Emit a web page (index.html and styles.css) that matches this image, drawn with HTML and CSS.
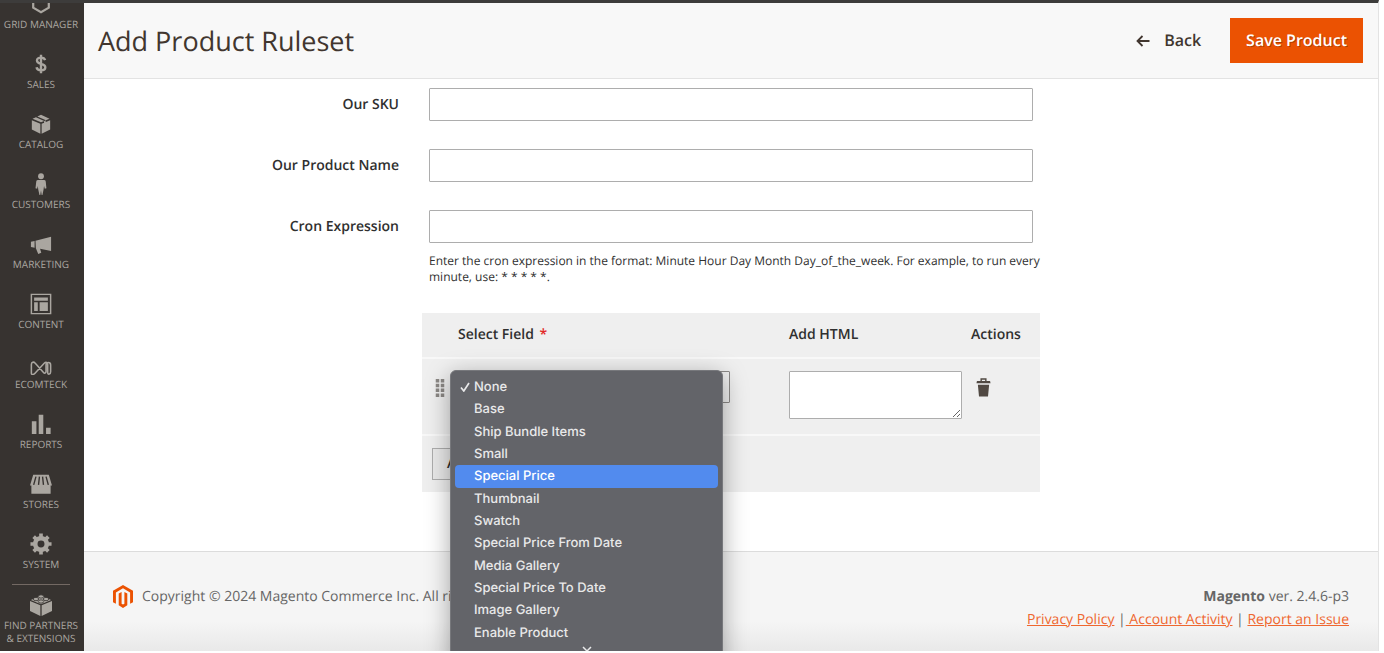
FILE: index.html
```html
<!DOCTYPE html>
<html lang="en">
<head>
<meta charset="utf-8">
<title>Add Product Ruleset</title>
<link rel="stylesheet" href="styles.css">
</head>
<body>
<div class="app">
  <nav class="menu" aria-label="Main menu">
    <a class="menu-item" href="#"><svg class="menu-icon" viewBox="0 0 24 24"><path d="M3.500 6v10L12 21l8.500-5V6L12 1z" fill="none" stroke="currentColor" stroke-width="2.400"/></svg><span>GRID MANAGER</span></a>
    <a class="menu-item" href="#"><svg class="menu-icon" viewBox="0 0 24 24"><path d="M16.500 7.800C16 6 14.500 5 12 5 9.300 5 7.600 6.300 7.600 8.200c0 2.300 2 3 4.400 3.600 2.600.6 4.700 1.300 4.700 3.700 0 2-1.900 3.400-4.700 3.400s-4.500-1.300-4.900-3.300M12 2v20" fill="none" stroke="currentColor" stroke-width="2.600"/></svg><span>SALES</span></a>
    <a class="menu-item" href="#"><svg class="menu-icon" viewBox="0 0 24 24"><path fill="currentColor" d="M2 7.800l9.300 3.800V22.500L2 18zM22 7.800l-9.300 3.800V22.500L22 18zM2.700 6.300L6.500 4.500l9 4.200L12 10.200zM8 3.800L12 2l9.300 4.300-4 1.600zM15.300 9v4.500l1.800-1V8z"/></svg><span>CATALOG</span></a>
    <a class="menu-item" href="#"><svg class="menu-icon tall" viewBox="0 0 24 24"><circle cx="12" cy="3.500" r="3.200" fill="currentColor"/><path fill="currentColor" d="M8.500 7.500h7c1.300 0 1.600 1 1.700 2l.7 7-1.800.6-.8-3-.5 4-1.200 5.900h-.9L12 19l-.8 5h-.9L9 18.100l-.5-4-.7 3-1.800-.6.800-7c.1-1 .5-2 1.700-2z"/></svg><span>CUSTOMERS</span></a>
    <a class="menu-item" href="#"><svg class="menu-icon" viewBox="0 0 24 24"><path fill="currentColor" d="M6 8.500L23 4v15.500L11 17.300l1.300 4.200-3.300 1.500-2.600-6.400zM1 9.500L5 8.800v7.400l-4-.8z"/></svg><span>MARKETING</span></a>
    <a class="menu-item" href="#"><svg class="menu-icon" viewBox="0 0 24 24"><path d="M1.500 1.500h21v21h-21z" fill="none" stroke="currentColor" stroke-width="1.600"/><path fill="currentColor" d="M4.500 5h15v3.500h-15zM4.500 10h4v9.500h-4zM10.500 10h9v9.500h-9z"/></svg><span>CONTENT</span></a>
    <a class="menu-item" href="#"><svg class="menu-icon" viewBox="0 -4 24 24"><path d="M1.500 18V8.500c0-2.800 2.500-3.300 4-1.500l9 10c1.500 1.800 3 1 3-1V9c0-3.500 5-3.500 5 0V16.500c0 3-2.800 3-3.200 1.500V8.500c0-2.500-2-3-3.800-1.300L5.500 18c-1.500 1.700-4 2.200-4 0z" fill="none" stroke="currentColor" stroke-width="1.700"/></svg><span>ECOMTECK</span></a>
    <a class="menu-item" href="#"><svg class="menu-icon" viewBox="0 0 24 24"><path fill="currentColor" d="M2 9h5v14H2zM9.500 2h5v21h-5zM17.500 16h5v7h-5z"/></svg><span>REPORTS</span></a>
    <a class="menu-item" href="#"><svg class="menu-icon" viewBox="0 0 24 24"><path fill="currentColor" d="M3.500 2h17L24 13.500h-1.500V22.500h-21V13.500H0z"/><path d="M6.500 4L4 13M10.300 4l-1 9M13.700 4l1 9M17.500 4L20 13" stroke="#373330" stroke-width="1.500"/></svg><span>STORES</span></a>
    <a class="menu-item" href="#"><svg class="menu-icon" viewBox="0 0 24 24"><circle cx="12" cy="12" r="6.300" fill="none" stroke="currentColor" stroke-width="5"/><path d="M12 .5v4M12 19.500v4M.5 12h4M19.500 12h4M4 4l3 3M17 17l3 3M4 20l3-3M17 7l3-3" stroke="currentColor" stroke-width="4"/></svg><span>SYSTEM</span></a>
    <a class="menu-item last" href="#"><svg class="menu-icon" viewBox="0 0 24 24"><path fill="currentColor" d="M0 7.500l11.300 4.900V24L0 18.500zM24 7.500l-11.300 4.900V24L24 18.500zM1 6.500L12 1.500l11 5-11 4.700z"/><g fill="currentColor" stroke="#373330" stroke-width=".9"><ellipse cx="12" cy="2.700" rx="3" ry="1.800"/><ellipse cx="6.500" cy="5.500" rx="3" ry="1.800"/><ellipse cx="17.500" cy="5.500" rx="3" ry="1.800"/><ellipse cx="12" cy="8.200" rx="3" ry="1.800"/></g></svg><span>FIND PARTNERS &amp;&nbsp;EXTENSIONS</span></a>
  </nav>

  <div class="page">
    <header class="page-header">
      <h1>Add Product Ruleset</h1>
      <div class="page-actions">
        <button class="back" type="button"><svg class="back-icon" viewBox="0 0 14 12"><path d="M13.500 6H1.500M6.500 1L1.500 6l5 5" fill="none" stroke="currentColor" stroke-width="1.800"/></svg>Back</button>
        <button class="save" type="button">Save Product</button>
      </div>
    </header>

    <main class="content">
      <form class="form">
        <label for="sku">Our SKU</label>
        <input id="sku" type="text">
        <label for="name">Our Product Name</label>
        <input id="name" type="text">
        <label for="cron">Cron Expression</label>
        <div>
          <input id="cron" type="text" aria-describedby="cron-note">
          <p class="note" id="cron-note">Enter the cron expression in the format: Minute Hour Day Month Day_of_the_week. For example, to run every minute, use: * * * * *.</p>
        </div>
        <div class="rows">
          <table>
            <colgroup><col class="col-drag"><col><col class="col-html"><col class="col-actions"></colgroup>
            <thead>
              <tr><th></th><th id="field-head">Select Field <span class="required">*</span></th><th id="html-head">Add HTML</th><th>Actions</th></tr>
            </thead>
            <tbody>
              <tr>
                <td class="drag"><svg class="drag-icon" viewBox="0 0 10 18"><path d="M2.500 0v18M7.500 0v18" stroke="#8b8885" stroke-width="3.500" stroke-dasharray="3.500 1.300"/></svg></td>
                <td>
                  <div class="picker">
                    <select aria-labelledby="field-head"><option>None</option></select>
                    <div class="popup">
                      <ul class="options" role="listbox" aria-labelledby="field-head">
                        <li role="option" aria-selected="true"><svg class="tick" viewBox="0 0 10 10"><path d="M1 5.500L3.800 9 9 1" fill="none" stroke="currentColor" stroke-width="1.700"/></svg>None</li>
                        <li role="option">Base</li>
                        <li role="option">Ship Bundle Items</li>
                        <li role="option">Small</li>
                        <li role="option" class="active">Special Price</li>
                        <li role="option">Thumbnail</li>
                        <li role="option">Swatch</li>
                        <li role="option">Special Price From Date</li>
                        <li role="option">Media Gallery</li>
                        <li role="option">Special Price To Date</li>
                        <li role="option">Image Gallery</li>
                        <li role="option">Enable Product</li>
                      </ul>
                      <svg class="more" viewBox="0 0 10 6"><path d="M1 1l4 4 4-4" fill="none" stroke="currentColor" stroke-width="1.500"/></svg>
                    </div>
                  </div>
                </td>
                <td class="html-cell"><textarea aria-labelledby="html-head"></textarea></td>
                <td><button class="delete" type="button" aria-label="Delete"><svg class="delete-icon" viewBox="0 0 16 20"><path d="M5.500 4V1.500h5V4" fill="none" stroke="#514943" stroke-width="1.500"/><path fill="#514943" d="M1 3.500h14l.5 2.500H.5zM2 7.500h12L12.800 20H3.200z"/></svg></button></td>
              </tr>
            </tbody>
            <tfoot>
              <tr><td colspan="4" class="add-cell"><button class="add" type="button">Add</button></td></tr>
            </tfoot>
          </table>
        </div>
      </form>
    </main>

    <footer class="footer">
      <p class="copyright"><svg class="logo" viewBox="0 0 20 23"><path fill="#eb5202" d="M10 0l10 5.800v11.400l-2.900 1.600V7.400L10 3.300 2.900 7.400v11.400L0 17.200V5.800z"/><path fill="#eb5202" d="M8.600 7v11.700l1.400.8 1.400-.8V7l2.900 1.600v11.700L10 22.900l-4.300-2.600V8.600z"/></svg>Copyright © 2024 Magento Commerce Inc. All rights reserved.</p>
      <div class="legal">
        <p><strong>Magento</strong> ver. 2.4.6-p3</p>
        <p><a href="#">Privacy Policy</a> |<a href="#">&nbsp;Account Activity</a> | <a href="#">Report an Issue</a></p>
      </div>
    </footer>
  </div>
</div>
</body>
</html>
```
FILE: styles.css
```css
* { box-sizing: border-box; }

body {
  margin: 0;
  padding: 0 5px 2px 0;
  height: 100vh;
  background: #fff;
  color: #303030;
  font: 14px/20px "Open Sans", "Noto Sans", sans-serif;
  text-rendering: geometricPrecision;
}

h1, p, ul { margin: 0; padding: 0; }

button, input, select, textarea { font: inherit; color: inherit; text-rendering: inherit; }

.app {
  position: relative;
  display: flex;
  height: 100%;
  overflow: hidden;
  border-top: 3px solid #3d3c3b;
  border-right: 1px solid #e3e3e3;
}

.menu {
  flex: none;
  display: flex;
  flex-direction: column;
  justify-content: flex-end;
  width: 84px;
  padding: 0 2px 6px 0;
  overflow: hidden;
  background: #373330;
}

.menu-item {
  flex: none;
  display: flex;
  flex-direction: column;
  align-items: center;
  justify-content: flex-end;
  gap: 3px;
  height: 60px;
  padding-bottom: 11px;
  color: #aaa6a0;
  font-size: 10px;
  line-height: 13px;
  text-align: center;
  text-decoration: none;
}

.menu-item.last {
  height: 63px;
  padding: 0;
}

.menu-item.last span { max-width: 80px; }

.menu-item.last::before {
  content: "";
  width: 58px;
  height: 1px;
  margin-bottom: 6px;
  background: #736963;
}

.menu-icon { width: 22px; height: 22px; }

.page {
  flex: 1;
  display: flex;
  flex-direction: column;
  min-width: 0;
}

.page-header {
  display: flex;
  align-items: center;
  justify-content: space-between;
  padding: 15px 15px 15px 14px;
  background: #f8f8f8;
  border-bottom: 1px solid #e3e3e3;
}

h1 {
  color: #41362f;
  font-size: 27px;
  font-weight: 400;
  line-height: 40px;
}

.page-actions { display: flex; align-items: center; gap: 13px; }

.back, .save {
  padding: 12px 16px;
  border: 0;
  font-size: 16px;
  font-weight: 600;
  line-height: 21px;
}

.back {
  display: flex;
  align-items: center;
  gap: 14px;
  background: none;
  color: #41362f;
}

.back-icon { width: 14px; height: 12px; }

.save {
  background: #eb5202;
  color: #fff;
  text-shadow: 1px 1px 0 rgba(0, 0, 0, .25);
}

.content { flex: 1; padding-top: 9px; }

.form {
  display: grid;
  grid-template-columns: 315px minmax(0, 604px);
  gap: 28px 30px;
}

.form > label {
  font-weight: 600;
  line-height: 33px;
  text-align: right;
}

input {
  display: block;
  width: 100%;
  height: 33px;
  padding: 0 10px;
  background: #fff;
  border: 1px solid #adadad;
  border-radius: 1px;
}

.note {
  margin: 10px -12px 0 0;
  font-size: 12px;
  line-height: 16px;
}

.rows { grid-column: 2; margin: 0 -7px; }

table {
  width: 100%;
  table-layout: fixed;
  border-collapse: separate;
  border-spacing: 0;
  background: #efefef;
}

.col-drag { width: 27px; }
.col-html { width: 182px; }
.col-actions { width: 78px; }

th {
  height: 46px;
  padding: 0 9px;
  border-bottom: 2px solid #f8f8f8;
  font-weight: 600;
  text-align: left;
}

.required { margin-left: 2px; color: #e22626; }

td { padding: 12px 9px; vertical-align: top; }

tbody td { height: 77px; border-bottom: 2px solid #f8f8f8; }

.drag { padding: 20px 0 0 13px; }

.drag-icon { display: block; width: 10px; height: 18px; }

.picker { position: relative; width: 272px; }

select {
  display: block;
  width: 100%;
  height: 32px;
  padding: 0 10px;
  appearance: none;
  background: #efefef;
  border: 1px solid #8c8a88;
  border-radius: 1px;
}

.popup {
  position: absolute;
  top: -1px;
  left: -8px;
  z-index: 2;
  width: 273px;
  height: 300px;
  padding: 5px 4px;
  background: #636469;
  border: 1px solid #77787c;
  border-radius: 6px;
  box-shadow: 0 6px 24px rgba(0, 0, 0, .35);
  color: #e9e9ea;
  font-family: Inter, "Liberation Sans", sans-serif;
}

.options {
  display: grid;
  grid-auto-rows: 1fr;
  height: 268px;
  list-style: none;
}

.options li {
  display: flex;
  align-items: center;
  padding-left: 19px;
  border-radius: 4px;
  font-size: 13px;
  font-weight: 500;
}

.options li[aria-selected] { gap: 4px; padding-left: 5px; }

.options .active { background: #528bee; color: #fff; }

.tick { width: 10px; height: 10px; }

.more { display: block; width: 10px; height: 6px; margin: 2px auto 0; }

.html-cell { padding-right: 0; }

textarea {
  display: block;
  width: 100%;
  height: 48px;
  background: #fff;
  border: 1px solid #adadad;
  border-radius: 1px;
}

.delete { display: block; padding: 6px 5px; border: 0; background: none; }

.delete-icon { display: block; width: 15px; height: 20px; }

.add-cell { padding: 12px 10px; }

.add {
  display: block;
  height: 32px;
  padding: 0 14px;
  background: #e9e9e9;
  border: 1px solid #adadad;
  font-weight: 600;
}

.footer {
  display: flex;
  justify-content: space-between;
  height: 100px;
  padding: 33px 29px 0;
  background: linear-gradient(#f5f5f5 70%, #e9e9e9);
  border-top: 1px solid #dcdcdc;
  color: #666;
  line-height: 23px;
}

.copyright { display: flex; align-items: flex-start; gap: 9px; }

.logo { width: 20px; height: 23px; }

.legal { text-align: right; }

.legal a { color: #ef672f; text-decoration: underline; }
```
